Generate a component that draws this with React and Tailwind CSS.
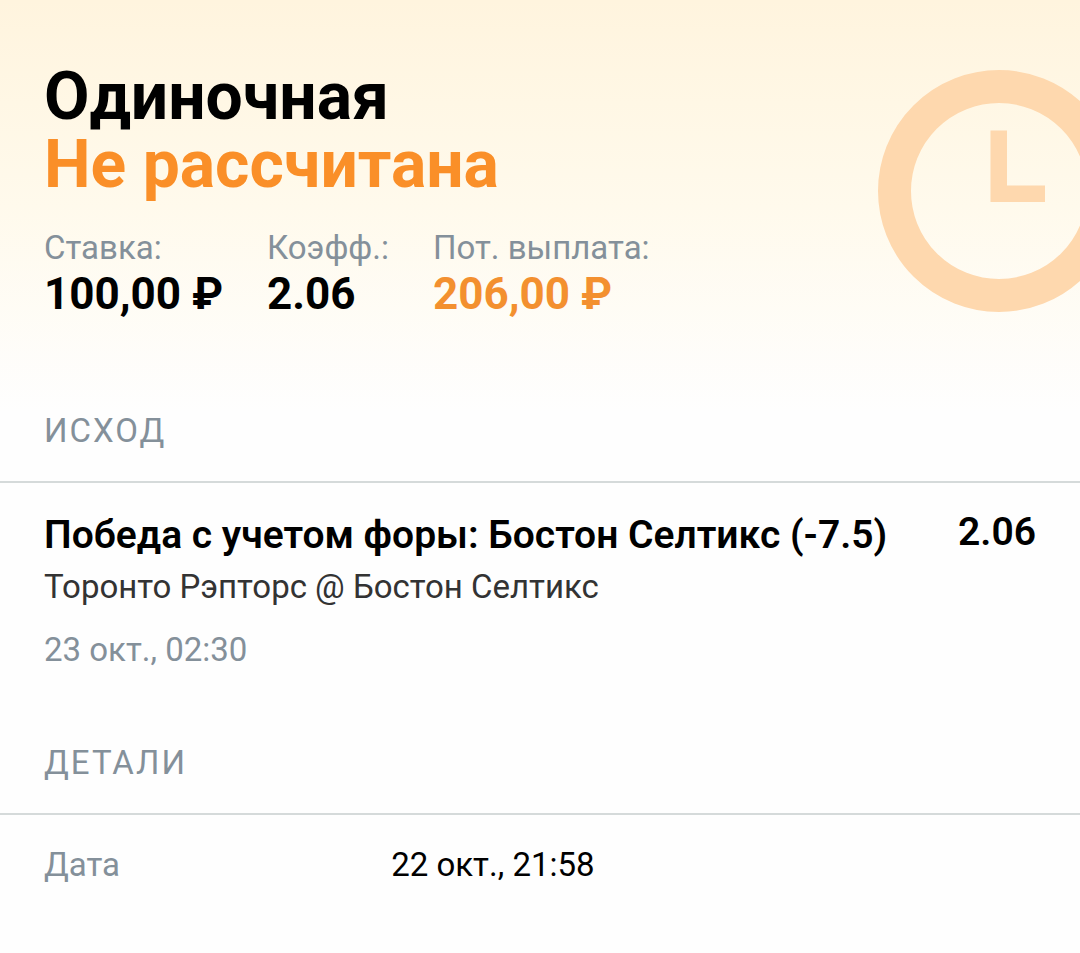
const stats = [
  { label: 'Ставка:', value: '100,00 ₽', accent: false },
  { label: 'Коэфф.:', value: '2.06', accent: false },
  { label: 'Пот. выплата:', value: '206,00 ₽', accent: true },
]

const outcomes = [
  {
    title: 'Победа с учетом форы: Бостон Селтикс (-7.5)',
    match: 'Торонто Рэпторс @ Бостон Селтикс',
    date: '23 окт., 02:30',
    odds: '2.06',
  },
]

const details = [{ label: 'Дата', value: '22 окт., 21:58' }]

function ClockIcon() {
  return (
    <svg viewBox="0 0 242 242" className="h-[242px] w-[242px] shrink-0" fill="none" aria-hidden="true">
      <circle cx="121" cy="121" r="104.5" stroke="#fed8ae" strokeWidth="33" />
      <path d="M112.5 60.5H129V115.5H167V132H112.5z" fill="#fed8ae" />
    </svg>
  )
}

function SectionTitle({ children }) {
  return (
    <h2 className="border-b-2 border-[#d5dada] px-11 pb-[30px] text-[33px] leading-10 tracking-[2px] text-[#84909a]">
      {children}
    </h2>
  )
}

export default function App() {
  return (
    <main className="min-h-screen overflow-hidden bg-[#fefefe] font-['Roboto','Noto_Sans',sans-serif] text-black">
      <header className="flex h-[411px] items-start justify-between overflow-hidden bg-linear-to-b from-[#fff4de] via-[#fffaec] to-[#fefefe] pt-[63px]">
        <div className="pl-11">
          <h1 className="text-[66px] leading-[68px] font-bold">Одиночная</h1>
          <p className="text-[66px] leading-[68px] font-bold text-[#fa8f28]">Не рассчитана</p>
          <dl className="mt-[27px] flex gap-11">
            {stats.map(s => (
              <div key={s.label}>
                <dt className="text-[33px] leading-[44px] text-[#84909a]">{s.label}</dt>
                <dd className={s.accent ? 'text-[44px] leading-[48px] font-bold text-[#f3902f]' : 'text-[44px] leading-[48px] font-bold'}>
                  {s.value}
                </dd>
              </div>
            ))}
          </dl>
        </div>
        <div className="-mr-10 pt-[7px]">
          <ClockIcon />
        </div>
      </header>

      <section>
        <SectionTitle>ИСХОД</SectionTitle>
        {outcomes.map(o => (
          <article key={o.title} className="flex items-start justify-between px-11 pt-7">
            <div>
              <h3 className="text-[39px] leading-[48px] font-semibold">{o.title}</h3>
              <p className="mt-1 text-[33px] leading-[48px] text-[#333333]">{o.match}</p>
              <time className="mt-[15px] block text-[33px] leading-[48px] text-[#84909a]">{o.date}</time>
            </div>
            <div className="text-[39px] leading-[42px] font-semibold">{o.odds}</div>
          </article>
        ))}
      </section>

      <section className="mt-[69px]">
        <SectionTitle>ДЕТАЛИ</SectionTitle>
        <dl className="px-11 pt-7">
          {details.map(d => (
            <div key={d.label} className="flex text-[33px] leading-[44px]">
              <dt className="w-[35%] text-[#84909a]">{d.label}</dt>
              <dd>{d.value}</dd>
            </div>
          ))}
        </dl>
      </section>
    </main>
  )
}
